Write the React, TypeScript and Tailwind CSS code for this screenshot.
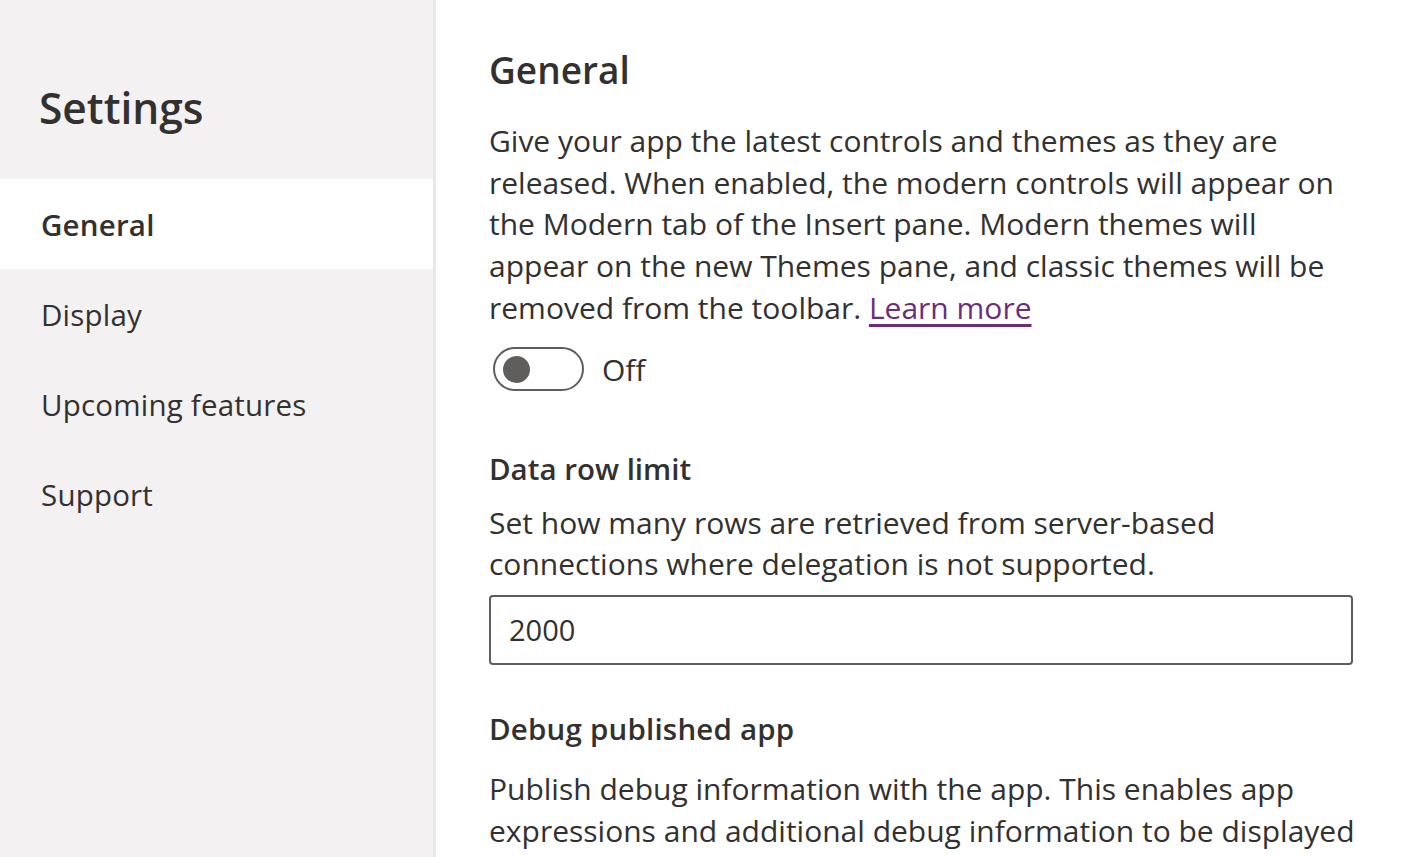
import { useState } from "react";

const navItems = ["General", "Display", "Upcoming features", "Support"];

function Toggle({ on, onChange }: { on: boolean; onChange: () => void }) {
  return (
    <button
      onClick={onChange}
      className={`flex h-[44px] w-[91px] shrink-0 items-center rounded-full border-2 px-[8px] ${
        on ? "justify-end border-[#0f6cbd] bg-[#0f6cbd]" : "justify-start border-[#605e5c] bg-white"
      }`}
    >
      <span className={`h-[27px] w-[27px] rounded-full ${on ? "bg-white" : "bg-[#605e5c]"}`} />
    </button>
  );
}

export default function App() {
  const [active, setActive] = useState("General");
  const [modern, setModern] = useState(false);
  const [limit, setLimit] = useState("2000");

  const body = "text-[30px] leading-[41.7px] whitespace-nowrap";

  return (
    <div
      className="flex h-[857px] w-full overflow-hidden bg-white text-[#323130]"
      style={{ fontFamily: '"Open Sans", "Noto Sans", sans-serif' }}
    >
      {/* Sidebar */}
      <aside className="flex w-[436px] shrink-0 flex-col border-r-[3px] border-[#ebe8ea] bg-[#f4f1f2]">
        <h1 className="pl-[39px] pt-[79px] pb-[42px] text-[42.5px] leading-[58px] font-semibold">
          Settings
        </h1>
        <nav className="flex flex-col">
          {navItems.map((item) => (
            <button
              key={item}
              onClick={() => setActive(item)}
              className={`h-[90px] pl-[41px] pt-[2px] text-left text-[29.5px] tracking-[0.2px] ${
                active === item ? "bg-white font-semibold" : "font-normal"
              }`}
            >
              {item}
            </button>
          ))}
        </nav>
      </aside>

      {/* Content */}
      <main className="w-[864px] shrink-0 pl-[53px] pt-[42px] box-content">
        <h2 className="text-[37px] leading-[56px] font-semibold">General</h2>
        <div className="mt-[22px]">
          <p className={body}>Give your app the latest controls and themes as they are</p>
          <p className={body}>released. When enabled, the modern controls will appear on</p>
          <p className={body}>the Modern tab of the Insert pane. Modern themes will</p>
          <p className={body}>appear on the new Themes pane, and classic themes will be</p>
          <p className={body}>
            removed from the toolbar.{" "}
            <a href="#" className="text-[#6b2d7c] underline underline-offset-[5px]">
              Learn more
            </a>
          </p>
        </div>
        <div className="mt-[18px] flex items-center gap-[18px] pl-[4px]">
          <Toggle on={modern} onChange={() => setModern(!modern)} />
          <span className="text-[30px]">{modern ? "On" : "Off"}</span>
        </div>

        <h3 className="mt-[56px] text-[29.5px] leading-[42px] font-semibold">Data row limit</h3>
        <div className="mt-[12px]">
          <p className={body}>Set how many rows are retrieved from server-based</p>
          <p className={body}>connections where delegation is not supported.</p>
        </div>
        <input
          value={limit}
          onChange={(e) => setLimit(e.target.value)}
          className="mt-[10px] block h-[70px] w-[864px] rounded-[4px] border-2 border-[#605e5c] px-[18px] text-[29px] outline-none"
        />

        <h3 className="mt-[43px] text-[29.5px] leading-[42px] font-semibold tracking-[0.2px]">
          Debug published app
        </h3>
        <div className="mt-[18px]">
          <p className={body}>Publish debug information with the app. This enables app</p>
          <p className={body}>expressions and additional debug information to be displayed</p>
          <p className={body}>in the Monitor when the app is published.</p>
        </div>
      </main>
    </div>
  );
}
